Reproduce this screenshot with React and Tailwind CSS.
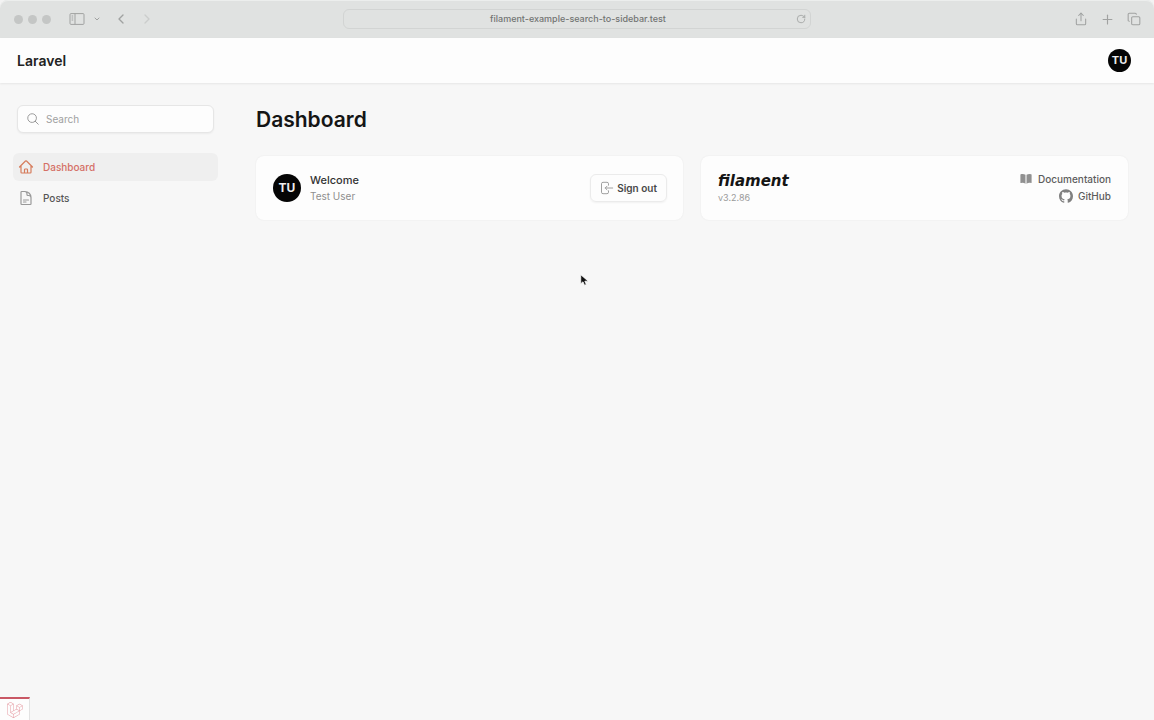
import React from 'react';
import {
  HiOutlineMagnifyingGlass,
  HiOutlineHome,
  HiOutlineDocumentText,
  HiMiniBookOpen,
} from 'react-icons/hi2';
import { SiGithub } from 'react-icons/si';
import { FaLaravel } from 'react-icons/fa';
import { ChevronDown, ChevronLeft, ChevronRight, Copy, Plus, RotateCw, Share } from 'lucide-react';

const navItems = [
  { label: 'Dashboard', icon: HiOutlineHome, active: true },
  { label: 'Posts', icon: HiOutlineDocumentText, active: false },
];

function SidebarIcon() {
  return (
    <svg viewBox="0 0 16 12" className="h-3 w-4" fill="none" stroke="currentColor">
      <rect x="1" y="0.6" width="14" height="10.8" rx="1" />
      <path d="M6 0.6v10.8M2.6 3h1.6M2.6 5h1.6M2.6 7h1.6" />
    </svg>
  );
}

function SignOutIcon() {
  return (
    <svg viewBox="0 0 14 14" className="size-[14px] text-[#a0a0a0]" fill="none" stroke="currentColor" strokeLinecap="round" strokeLinejoin="round">
      <path d="M8.5 4.2V2.8a1.5 1.5 0 0 0-1.5-1.5H3a1.5 1.5 0 0 0-1.5 1.5v8.4A1.5 1.5 0 0 0 3 12.7h4a1.5 1.5 0 0 0 1.5-1.5V9.8" />
      <path d="M12.7 7H5.2M7 5.2 5.2 7 7 8.8" />
    </svg>
  );
}

function BrowserBar() {
  return (
    <div className="bg-[#f3f3f3]">
      <div className="grid h-[38px] grid-cols-[1fr_468px_1fr] items-center rounded-t-lg bg-[#e0e2e1] text-[#a0a2a1] shadow-[inset_0_1px_0_#eceeed]">
        <div className="flex items-center pl-[14px]">
          <div className="flex gap-[5px]">
            <span className="size-[9px] rounded-full bg-[#c4c6c5]" />
            <span className="size-[9px] rounded-full bg-[#c4c6c5]" />
            <span className="size-[9px] rounded-full bg-[#c4c6c5]" />
          </div>
          <button type="button" aria-label="Sidebar" className="ml-[18px]"><SidebarIcon /></button>
          <button type="button" aria-label="Tab groups" className="ml-2"><ChevronDown size={8} strokeWidth={3} /></button>
          <button type="button" aria-label="Back" className="ml-3"><ChevronLeft size={16} strokeWidth={2} /></button>
          <button type="button" aria-label="Forward" className="ml-[10px] text-[#cbcdcc]"><ChevronRight size={16} strokeWidth={2} /></button>
        </div>
        <div className="flex h-5 items-center rounded-md border border-[#d2d4d3] px-1">
          <span className="w-3" />
          <span className="flex-1 text-center text-[9px] leading-3 font-medium text-[#727473]">filament-example-search-to-sidebar.test</span>
          <button type="button" aria-label="Reload"><RotateCw size={10} strokeWidth={2} /></button>
        </div>
        <div className="flex items-center justify-end gap-3 pr-[13px]">
          <button type="button" aria-label="Share"><Share size={14} strokeWidth={1.8} /></button>
          <button type="button" aria-label="New tab"><Plus size={15} strokeWidth={1.8} /></button>
          <button type="button" aria-label="Tabs"><Copy size={14} strokeWidth={1.8} /></button>
        </div>
      </div>
    </div>
  );
}

function Topbar() {
  return (
    <header className="flex h-[45px] items-center justify-between bg-[#fdfdfd] pr-[23px] pl-[17px] shadow-[0_1px_2px_rgba(0,0,0,0.07)]">
      <a href="#" className="text-[14px] leading-5 font-semibold text-[#222]">Laravel</a>
      <button type="button" aria-label="User menu" className="size-[23px] rounded-full bg-[#050505] text-[11px] font-bold text-[#eee]">
        TU
      </button>
    </header>
  );
}

function Sidebar() {
  return (
    <aside className="w-[231px] shrink-0 px-[13px] pt-[22px]">
      <label className="mx-1 flex h-7 items-center gap-[6px] rounded-md border border-[#e6e6e6] bg-[#fdfdfd] px-2 shadow-xs">
        <HiOutlineMagnifyingGlass size={14} className="shrink-0 text-[#8e8e8e]" />
        <input type="search" aria-label="Search" placeholder="Search" className="w-full min-w-0 bg-transparent text-[10px] text-[#444] outline-none placeholder:text-[#a0a0a0]" />
      </label>
      <nav className="mt-5 flex flex-col gap-[3px]">
        {navItems.map(({ label, icon: Icon, active }) => (
          <a
            key={label}
            href="#"
            className={
              active
                ? 'flex h-7 items-center gap-[9px] rounded-md bg-[#efefef] px-[5px] text-[10px] font-medium text-[#d56f66]'
                : 'flex h-7 items-center gap-[9px] rounded-md px-[5px] text-[10px] font-medium text-[#555]'
            }
          >
            <Icon size={16} strokeWidth={1.8} className={active ? 'text-[#d67c5c]' : 'text-[#999]'} />
            {label}
          </a>
        ))}
      </nav>
    </aside>
  );
}

function AccountCard() {
  return (
    <section className="flex h-16 items-center rounded-lg bg-[#fdfdfd] px-4 shadow-[0_0_2px_rgba(0,0,0,0.07)]">
      <div className="ml-px flex size-7 items-center justify-center rounded-full bg-[#050505] text-[12px] font-bold text-[#eee]">TU</div>
      <div className="ml-[9px] flex-1">
        <h2 className="text-[11px] leading-4 font-medium text-[#333]">Welcome</h2>
        <p className="text-[10px] leading-4 text-[#8e8e8e]">Test User</p>
      </div>
      <button type="button" className="flex h-7 items-center gap-[3px] rounded-md border border-[#ebebeb] px-[9px] text-[10px] font-semibold text-[#484848] shadow-xs">
        <SignOutIcon />
        Sign out
      </button>
    </section>
  );
}

function FilamentCard() {
  return (
    <section className="flex h-16 items-start justify-between rounded-lg bg-[#fdfdfd] px-[17px] pt-[15px] shadow-[0_0_2px_rgba(0,0,0,0.07)]">
      <div>
        <a href="#" className="block font-['DejaVu_Sans',sans-serif] text-[15px] leading-5 font-bold text-[#151515] italic">filament</a>
        <p className="mt-px text-[9px] leading-3 text-[#9a9a9a]">v3.2.86</p>
      </div>
      <div className="flex flex-col items-end gap-px text-[10px] leading-4 font-medium text-[#5c5c5c]">
        <a href="#" className="flex items-center gap-[5px]">
          <HiMiniBookOpen size={14} className="text-[#909090]" />
          Documentation
        </a>
        <a href="#" className="flex items-center gap-[5px]">
          <SiGithub size={14} className="text-[#808080]" />
          GitHub
        </a>
      </div>
    </section>
  );
}

export default function App() {
  return (
    <div className="flex min-h-screen flex-col bg-[#f7f7f7] font-[Inter,sans-serif]">
      <BrowserBar />
      <Topbar />
      <div className="flex flex-1">
        <Sidebar />
        <main className="flex-1 pt-[23px] pr-[26px] pl-[25px]">
          <h1 className="text-[21px] leading-7 font-semibold text-[#151515]">Dashboard</h1>
          <div className="mt-[22px] grid grid-cols-2 gap-[18px]">
            <AccountCard />
            <FilamentCard />
          </div>
        </main>
      </div>

      {/* debug bar toggle */}
      <button type="button" aria-label="Open debug bar" className="fixed bottom-0 left-0 flex h-[23px] w-[30px] items-center justify-center border-t-2 border-r border-t-[#c95865] border-r-[#e2e2e2] bg-[#fdfdfd] text-[#e69aa2]">
        <FaLaravel size={16} />
      </button>

      {/* mouse pointer */}
      <svg viewBox="0 0 12 16" className="pointer-events-none fixed top-[274px] left-[580px] h-3 w-[9px]">
        <path d="M1 1v12l3-2.6 2 4.6 2.4-1-2-4.4H11z" fill="#111" stroke="#fff" />
      </svg>
    </div>
  );
}
